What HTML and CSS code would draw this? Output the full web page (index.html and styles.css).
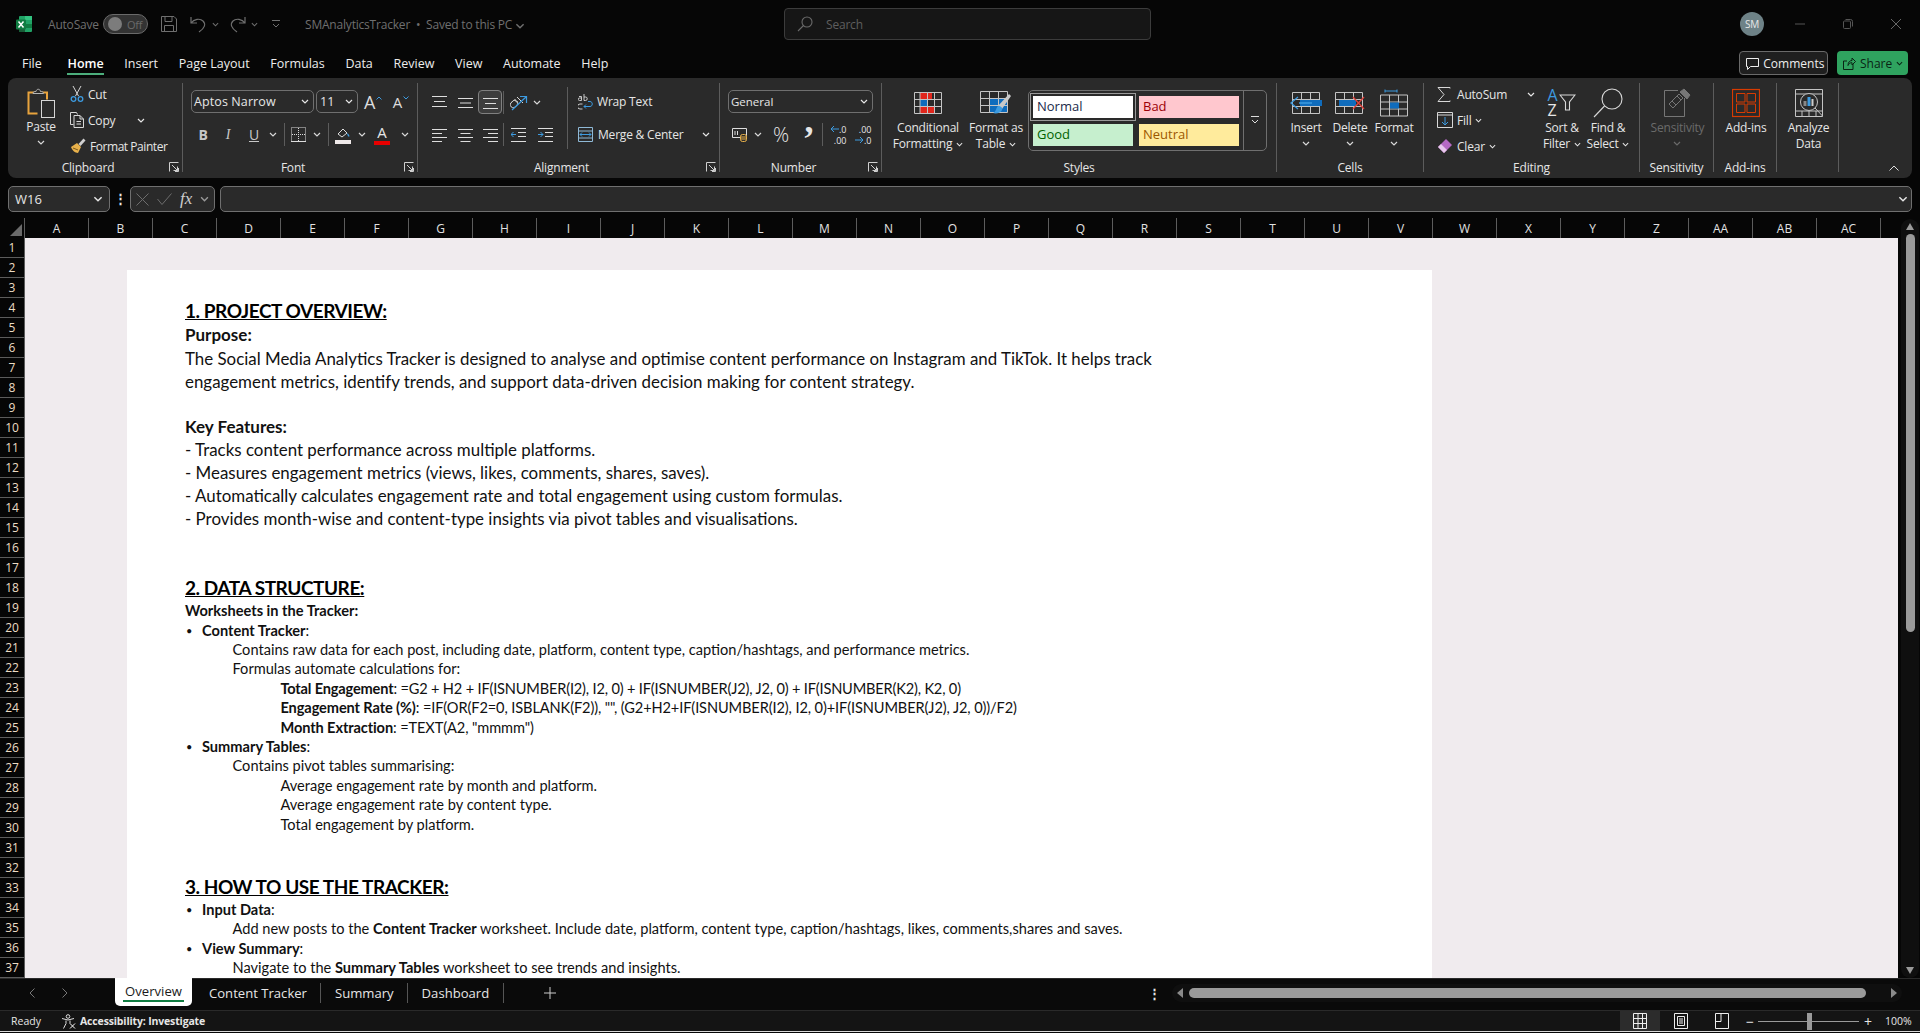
FILE: index.html
```html
<!DOCTYPE html>
<html lang="en">
<head>
    <meta charset="UTF-8">
    <title>SMAnalyticsTracker - Excel</title>
    <link rel="stylesheet" href="styles.css">
</head>
<body>
    <svg class="sprite">
        <symbol id="chev" viewBox="0 0 8 5"><path d="M1 1l3 3 3-3" fill="none" stroke="currentColor" stroke-width="1.2"/></symbol>
        <symbol id="launch" viewBox="0 0 10 10"><path d="M.5 9.5v-9h9M3 3l5.5 5.5M4.5 8.5h4v-4M9.5 6v3.5H6" fill="none" stroke="#cfcfcf"/></symbol>
        <symbol id="lines-l" viewBox="0 0 15 14"><path d="M0 1.5h15M0 5.5h10M0 9.5h15M0 13.5h10" stroke="#ddd"/></symbol>
        <symbol id="lines-c" viewBox="0 0 15 14"><path d="M0 1.5h15M2.500 5.500h10M0 9.500h15M2.500 13.500h10" stroke="#ddd"/></symbol>
        <symbol id="lines-r" viewBox="0 0 15 14"><path d="M0 1.5h15M5 5.500h10M0 9.500h15M5 13.500h10" stroke="#ddd"/></symbol>
    </svg>

    <header class="titlebar">
        <svg class="logo" width="16" height="16" viewBox="0 0 16 16"><rect x="3" width="13" height="16" rx="1" fill="#21a366"/><rect x="9" y="8" width="7" height="4" fill="#107c41"/><rect x="3" y="8" width="6" height="8" fill="#185c37"/><rect x="9" width="7" height="4" fill="#33c481"/><rect y="3.500" width="10" height="10" rx="1" fill="#107c41"/><path d="M2.500 5.500l5 6M7.500 5.500l-5 6" stroke="#fff" stroke-width="1.500"/></svg>
        <span class="autosave">AutoSave</span>
        <span class="toggle"><i></i>Off</span>
        <svg class="save" width="16" height="16" viewBox="0 0 16 16" fill="none" stroke="#6f6f6f"><path d="M.5.500h12.500l2.500 2.500v12.500H.5zM4 .5v5h7v-5M3.500 15.500v-6h9v6"/></svg>
        <svg class="undo" width="17" height="17" viewBox="0 0 17 17" fill="none" stroke="#6f6f6f" stroke-width="1.200"><path d="M1 1v6h6M1 7c3-4 9-5 12-2 3 3 2 7-4 11"/></svg>
        <svg class="tiny" width="7" height="5"><use href="#chev"/></svg>
        <svg class="redo" width="17" height="17" viewBox="0 0 17 17" fill="none" stroke="#6f6f6f" stroke-width="1.200"><path d="M16 1v6h-6M16 7c-3-4-9-5-12-2-3 3-2 7 4 11"/></svg>
        <svg class="tiny" width="7" height="5"><use href="#chev"/></svg>
        <svg class="qat" width="8" height="8" viewBox="0 0 8 8" fill="none" stroke="#6f6f6f"><path d="M0 .5h8M1 4l3 3 3-3"/></svg>
        <span class="doc-name">SMAnalyticsTracker &nbsp;•&nbsp; Saved to this PC <svg width="10" height="6"><use href="#chev"/></svg></span>
        <div class="search">
            <svg width="16" height="16" viewBox="0 0 16 16" fill="none" stroke="#6a6a6a" stroke-width="1.100"><circle cx="10" cy="6" r="5"/><path d="M6.500 9.500L1 15"/></svg>
            <span>Search</span>
        </div>
        <span class="avatar">SM</span>
        <svg class="win first" width="10" height="10" viewBox="0 0 10 10"><path d="M0 5h10" stroke="#555"/></svg>
        <svg class="win" width="10" height="10" viewBox="0 0 10 10" fill="none" stroke="#555"><rect x=".5" y="2" width="7" height="7.500" rx="1"/><path d="M2.500 .5h5a2 2 0 0 1 2 2v5"/></svg>
        <svg class="win" width="10" height="10" viewBox="0 0 10 10"><path d="M0 0l10 10M10 0L0 10" stroke="#666"/></svg>
    </header>

    <nav class="menu">
        <a class="file">File</a><a class="on">Home</a><a>Insert</a><a>Page Layout</a><a>Formulas</a><a>Data</a><a>Review</a><a>View</a><a>Automate</a><a>Help</a>
        <button class="comments"><svg width="13" height="13" viewBox="0 0 13 13" fill="none" stroke="#eee"><path d="M.5 1.500h12v8h-8l-3 3v-3h-1z"/></svg>Comments</button>
        <button class="share"><svg width="13" height="13" viewBox="0 0 13 13" fill="none" stroke="#0a2415"><path d="M10 7v5.500H.5V4H4M5 8.500C5 5 7 3.500 9 3.500V1l3.500 3.500L9 8V5.700C7 5.700 6 6.500 5 8.500z"/></svg>Share <svg width="7" height="5"><use href="#chev"/></svg></button>
    </nav>

    <section class="ribbon">
        <div class="group g-clip">
            <div class="body clip-body">
                <div class="big paste">
                    <svg width="28" height="30" viewBox="0 0 28 30" fill="none"><path d="M13 4.500H1.500v21h9" stroke="#e8a33d" stroke-width="2"/><path d="M13 4.500h7v7" stroke="#e8a33d" stroke-width="2"/><path d="M6 5.500c0-2 2-2 3-2 .5-3 4-3 4.500 0 1 0 3 0 3 2z" fill="#2a2a2a" stroke="#b5b5b5"/><rect x="14.500" y="12.500" width="13" height="17" fill="#2a2a2a" stroke="#d6d6d6"/></svg>
                    <span>Paste</span>
                    <svg class="c" width="8" height="5"><use href="#chev"/></svg>
                </div>
                <div class="small-col">
                    <div class="small"><svg width="14" height="16" viewBox="0 0 14 16" fill="none"><path d="M3 0l5.500 10M11 0L5.500 10" stroke="#d8d8d8"/><circle cx="3.500" cy="13" r="2.300" stroke="#3d9be0" stroke-width="1.300"/><circle cx="10.500" cy="13" r="2.300" stroke="#3d9be0" stroke-width="1.300"/></svg>Cut</div>
                    <div class="small"><svg width="14" height="16" viewBox="0 0 14 16" fill="none" stroke="#d8d8d8"><path d="M3.500 12.500h-3V.5h6l1 2"/><path d="M4 3.500h6l3.500 3.500v8.500H4zM10 3.500V7h3.500M6.500 9.500h4.500M6.500 12h4.500"/></svg>Copy <svg class="copy-c" width="8" height="5"><use href="#chev"/></svg></div>
                    <div class="small painter"><svg width="16" height="16" viewBox="0 0 16 16"><path d="M1 9l6-4 4 4-3 6c-3 0-6-3-7-6z" fill="#e8b14b"/><path d="M8.500 6l5-5.500 2 2-5 5.500z" fill="#cfcfcf"/><path d="M3 10l5 2" stroke="#7c5a1c"/></svg>Format Painter</div>
                </div>
            </div>
            <div class="label has-launch">Clipboard<svg class="launch" width="10" height="10"><use href="#launch"/></svg></div>
        </div>

        <div class="group g-font">
            <div class="body">
                <div class="row font-r1">
                    <div class="combo fontname">Aptos Narrow<svg width="8" height="5"><use href="#chev"/></svg></div>
                    <div class="combo fontname">11<svg width="8" height="5"><use href="#chev"/></svg></div>
                    <span class="grow">A<svg width="6" height="4" viewBox="0 0 6 4"><path d="M.5 3.500L3 1l2.500 2.500" fill="none" stroke="#3d9be0"/></svg></span>
                    <span class="shrink">A<svg width="6" height="4" viewBox="0 0 6 4"><path d="M.5.500L3 3 5.500.5" fill="none" stroke="#3d9be0"/></svg></span>
                </div>
                <div class="row font-r2">
                    <b class="btn">B</b>
                    <i class="btn serif">I</i>
                    <u class="btn">U</u>
                    <svg class="c" width="8" height="5"><use href="#chev"/></svg>
                    <span class="vsep"></span>
                    <svg width="15" height="15" viewBox="0 0 15 15" fill="none" stroke="#ddd"><path d="M.5.500h14v14H.5z" stroke-dasharray="1 1"/><path d="M7.500 1v13M1 7.500h13" stroke-dasharray="1 1"/><path d="M0 14.500h15"/></svg>
                    <svg class="c" width="8" height="5"><use href="#chev"/></svg>
                    <span class="vsep"></span>
                    <svg width="16" height="18" viewBox="0 0 16 18"><path d="M3 8l5-5 4 4-5 4z" fill="none" stroke="#ddd"/><path d="M12 7c2 1 3 3 2 4-1-1-2-2-2-4z" fill="#3d9be0"/><rect y="14" width="16" height="4" fill="#efe9e9"/></svg>
                    <svg class="c" width="8" height="5"><use href="#chev"/></svg>
                    <span class="color-a">A<i></i></span>
                    <svg class="c" width="8" height="5"><use href="#chev"/></svg>
                </div>
            </div>
            <div class="label has-launch">Font<svg class="launch" width="10" height="10"><use href="#launch"/></svg></div>
        </div>

        <div class="group g-align">
            <div class="body align-body">
                <div class="align-grid">
                    <div class="row al-r1">
                        <svg width="15" height="13" viewBox="0 0 15 13"><path d="M0 .5h15M2 5.500h11M0 10.500h15" stroke="#ddd"/></svg>
                        <svg width="15" height="13" viewBox="0 0 15 13"><path d="M0 2.500h15M2 7h11M0 11.500h15" stroke="#ddd"/></svg>
                        <span class="sel"><svg width="15" height="13" viewBox="0 0 15 13"><path d="M0 2.500h15M2 7.500h11M0 12.500h15" stroke="#ddd"/></svg></span>
                        <span class="vsep"></span>
                        <svg width="18" height="17" viewBox="0 0 18 17" fill="none"><path d="M2 8a3 3 0 1 1 4 4 3 3 0 1 1-4-4zM7 3l6 6M8 8a2.500 2.500 0 0 1-3-3" stroke="#d8d8d8"/><path d="M2 16L16 3M10 2.500h6.500V9" stroke="#3d9be0" stroke-width="1.200"/></svg>
                        <svg class="c" width="8" height="5"><use href="#chev"/></svg>
                    </div>
                    <div class="row al-r2">
                        <svg width="15" height="14"><use href="#lines-l"/></svg>
                        <svg width="15" height="14"><use href="#lines-c"/></svg>
                        <svg width="15" height="14"><use href="#lines-r"/></svg>
                        <span class="vsep"></span>
                        <svg width="15" height="14" viewBox="0 0 15 14"><path d="M0 .5h15M7 4.500h8M7 8.500h8M0 13.500h15" stroke="#ddd"/><path d="M5 6.500H0M2.500 4L0 6.500 2.500 9" fill="none" stroke="#3d9be0"/></svg>
                        <svg width="15" height="14" viewBox="0 0 15 14"><path d="M0 .5h15M7 4.500h8M7 8.500h8M0 13.500h15" stroke="#ddd"/><path d="M0 6.500h5M2.500 4L5 6.500 2.500 9" fill="none" stroke="#3d9be0"/></svg>
                    </div>
                </div>
                <span class="vsep tall"></span>
                <div class="wrap-col">
                    <div class="small wrap"><svg width="15" height="16" viewBox="0 0 15 16"><path d="M1 2.500h2.500v4H1.500a1 1 0 0 1 0-2.500h2M6 0v6.500h1.500a1.500 1.500 0 0 0 0-3.500H6M4.500 10H2a2 2 0 0 0 0 5h2.500" fill="none" stroke="#d8d8d8" stroke-width=".9"/><path d="M6 12.500h6c3 0 3-5 0-5h-2M8 10.500L6 12.500l2 2" fill="none" stroke="#3d9be0"/></svg>Wrap Text</div>
                    <div class="small merge"><svg width="15" height="15" viewBox="0 0 15 15" fill="none"><path d="M.5.500h14v14H.5zM.5 4h14M.5 11h14" stroke="#8fb9d6"/><path d="M2 7.500h11M4 5.500l-2 2 2 2M11 5.500l2 2-2 2" stroke="#3d9be0"/></svg>Merge &amp; Center<svg class="merge-c" width="8" height="5"><use href="#chev"/></svg></div>
                </div>
            </div>
            <div class="label has-launch">Alignment<svg class="launch" width="10" height="10"><use href="#launch"/></svg></div>
        </div>

        <div class="group g-num">
            <div class="body">
                <div class="row"><div class="combo general">General<svg width="8" height="5"><use href="#chev"/></svg></div></div>
                <div class="row num-r2">
                    <svg width="16" height="15" viewBox="0 0 16 15" fill="none"><path d="M.5 1.500h14v9H.5z" stroke="#ddd"/><path d="M3 4v4M5.500 4v4" stroke="#ddd"/><rect x="8.500" y="7.500" width="6" height="7" rx="2" fill="#2a2a2a" stroke="#e8b14b"/><path d="M8.500 10h6M8.500 12h6" stroke="#e8b14b"/></svg>
                    <svg class="c" width="8" height="5"><use href="#chev"/></svg>
                    <span class="pct">%</span>
                    <span class="comma">,</span>
                    <span class="vsep"></span>
                    <span class="dec"><span class="dec-top"><svg width="9" height="8" viewBox="0 0 9 8" fill="none" stroke="#3d9be0"><path d="M9 4H1M4 1L1 4l3 3"/></svg>.0</span><span class="dec-low">.00</span></span>
                    <span class="dec"><span class="dec-low">.00</span><span class="dec-top"><svg width="9" height="8" viewBox="0 0 9 8" fill="none" stroke="#3d9be0"><path d="M0 4h8M5 1l3 3-3 3"/></svg>.0</span></span>
                </div>
            </div>
            <div class="label has-launch">Number<svg class="launch" width="10" height="10"><use href="#launch"/></svg></div>
        </div>

        <div class="group g-styles">
            <div class="body styles-body">
                <div class="big w68">
                    <svg width="28" height="22" viewBox="0 0 28 22"><path d="M6 1h12v6H6zM6 15h14v6H6z" fill="#e0261c"/><path d="M6 8h8v6H6z" fill="#0f6cbd"/><path d="M.5.500h27v21H.5zM.5 7.500h27M.5 14.500h27M6 .5v21M13.500.5v21M20.500.5v21" fill="none" stroke="#c4c4c4"/></svg>
                    <span>Conditional</span>
                    <span>Formatting <svg width="7" height="5"><use href="#chev"/></svg></span>
                </div>
                <div class="big w58">
                    <svg width="32" height="24" viewBox="0 0 32 24"><path d="M10 8h18v13H10z" fill="#0f6cbd"/><path d="M.5.500h27v21H.5zM.5 7.500h27M.5 14.500h27M9.500.5v21M18.500.5v21" fill="none" stroke="#c4c4c4"/><path d="M18 15L29 3l2 2-9 13z" fill="#c9c9c9"/><path d="M18 15c3 0 5 2 4 4-1 3-6 4-9 3 3-1 3-5 5-7z" fill="#3d9be0"/></svg>
                    <span>Format as</span>
                    <span>Table <svg width="7" height="5"><use href="#chev"/></svg></span>
                </div>
                <div class="gallery">
                    <div class="swatches">
                        <span class="sw normal">Normal</span>
                        <span class="sw bad">Bad</span>
                        <span class="sw good">Good</span>
                        <span class="sw neutral">Neutral</span>
                    </div>
                    <div class="more"><svg width="8" height="8" viewBox="0 0 8 8" fill="none" stroke="#ddd"><path d="M0 .5h8M1 4l3 3 3-3"/></svg></div>
                </div>
            </div>
            <div class="label">Styles</div>
        </div>

        <div class="group g-cells">
            <div class="body cells-body">
                <div class="big w44">
                    <svg width="32" height="22" viewBox="0 0 32 22"><path d="M2.500.5h27v21h-27zM2.500 7.500h27M2.500 14.500h27M11.500.5v21M20.500.5v21" fill="none" stroke="#c4c4c4"/><path d="M10 8h22v6H10z" fill="#0f6cbd"/><path d="M9 11h13M8 5l-7 6 7 6" fill="none" stroke="#3d9be0" stroke-width="1.300"/></svg>
                    <span>Insert</span>
                    <svg class="c" width="8" height="5"><use href="#chev"/></svg>
                </div>
                <div class="big w44">
                    <svg width="30" height="22" viewBox="0 0 30 22"><path d="M.5.500h27v21H.5zM.5 7.500h27M.5 14.500h27M9.500.5v21M18.500.5v21" fill="none" stroke="#c4c4c4"/><path d="M4 8h17v6H4z" fill="#0f6cbd"/><path d="M18 5l11 12M29 5L18 17" stroke="#e0403a" stroke-width="1.300"/></svg>
                    <span>Delete</span>
                    <svg class="c" width="8" height="5"><use href="#chev"/></svg>
                </div>
                <div class="big w44">
                    <svg width="28" height="27" class="fmt" viewBox="0 0 28 27"><path d="M5 1.500h12M5 0v3M17 0v3" stroke="#3d9be0"/><path d="M.5 5.500h27v21H.5zM.5 12.500h27M.5 19.500h27M9.500 5.500v21M18.500 5.500v21" fill="none" stroke="#c4c4c4"/><path d="M10 13h9v6h-9z" fill="#0f6cbd"/></svg>
                    <span>Format</span>
                    <svg class="c" width="8" height="5"><use href="#chev"/></svg>
                </div>
            </div>
            <div class="label">Cells</div>
        </div>

        <div class="group g-edit">
            <div class="body edit-body">
                <div class="small-col">
                    <div class="small sum"><svg width="14" height="15" viewBox="0 0 14 15" fill="none" stroke="#d8d8d8"><path d="M13 1.500V.5H1l6 7-6 7h12v-1"/></svg>AutoSum<svg class="sum-c" width="8" height="5"><use href="#chev"/></svg></div>
                    <div class="small"><svg width="16" height="16" viewBox="0 0 16 16" fill="none"><path d="M.5.500h15v15H.5zM.5 3h15" stroke="#d8d8d8"/><path d="M8 5v8M5 10l3 3 3-3" stroke="#3d9be0"/></svg>Fill <svg width="7" height="5"><use href="#chev"/></svg></div>
                    <div class="small"><svg width="16" height="16" viewBox="0 0 16 16"><path d="M1 9l8-8 6 6-8 8z" fill="#b569c4"/><path d="M1 9l3-3 6 6-3 3z" fill="#e7c6ec"/></svg>Clear <svg width="7" height="5"><use href="#chev"/></svg></div>
                </div>
                <div class="big w46">
                    <span class="sort-ic">
                        <span class="az"><em>A</em><span>Z</span></span>
                        <svg width="17" height="17" viewBox="0 0 17 17" fill="none" stroke="#d8d8d8" stroke-width="1.100"><path d="M1 1h15l-5.500 7v8h-4V8z"/></svg>
                    </span>
                    <span>Sort &amp;</span>
                    <span>Filter <svg width="7" height="5"><use href="#chev"/></svg></span>
                </div>
                <div class="big w46">
                    <svg width="30" height="30" viewBox="0 0 30 30" fill="none" stroke="#d8d8d8" stroke-width="1.100"><circle cx="19" cy="11" r="10"/><path d="M11.500 18L1 29"/></svg>
                    <span>Find &amp;</span>
                    <span>Select <svg width="7" height="5"><use href="#chev"/></svg></span>
                </div>
            </div>
            <div class="label">Editing</div>
        </div>

        <div class="group g-sens">
            <div class="body center">
                <div class="big dim">
                    <svg width="28" height="30" viewBox="0 0 28 30" fill="none" stroke="#767676"><path d="M15 2.500H1.500v26h20V10"/><path d="M6 16l10-10 4 4-10 10z M14 8l4 4M9 13l4 4"/><path d="M17 4l4-3 6 6-3 4z" fill="#767676"/></svg>
                    <span>Sensitivity</span>
                    <svg class="c" width="8" height="5"><use href="#chev"/></svg>
                </div>
            </div>
            <div class="label">Sensitivity</div>
        </div>

        <div class="group g-add">
            <div class="body center">
                <div class="big">
                    <svg width="28" height="28" viewBox="0 0 28 28" fill="none" stroke="#d83b01"><rect x=".5" y=".5" width="27" height="27" stroke-width="1.200"/><path d="M4.500 4.500h8.500v8.500H4.500zM15 4.500h8.500v8.500H15zM4.500 15h8.500v8.500H4.500zM15 15h8.500v8.500H15z"/></svg>
                    <span>Add-ins</span>
                </div>
            </div>
            <div class="label">Add-ins</div>
        </div>

        <div class="group g-data">
            <div class="body center">
                <div class="big">
                    <svg width="28" height="28" viewBox="0 0 28 28" fill="none" stroke="#c4c4c4"><path d="M.5.500h27v27H.5zM.5 5h27M.5 22h27M7 22v5.500M14 22v5.500M21 22v5"/><circle cx="14" cy="13" r="8.500" fill="#2a2a2a"/><path d="M20 19l8 8.500"/><rect x="8.500" y="12" width="3" height="5" fill="#888" stroke="none"/><rect x="12.500" y="8" width="3" height="9" fill="#3d9be0" stroke="none"/><rect x="16.500" y="10" width="2" height="7" fill="#ccc" stroke="none"/></svg>
                    <span>Analyze</span>
                    <span>Data</span>
                </div>
            </div>
            <div class="label"></div>
        </div>
        <svg class="collapse" width="10" height="6" viewBox="0 0 10 6"><path d="M.5 5.500L5 1l4.500 4.500" fill="none" stroke="#ddd"/></svg>
    </section>

    <section class="formula">
        <div class="namebox">W16<svg width="10" height="6"><use href="#chev"/></svg></div>
        <span class="fdots">⋮</span>
        <div class="fbtns">
            <svg width="13" height="13" viewBox="0 0 13 13"><path d="M.5.500l12 12M12.500.5l-12 12" stroke="#6d6d6d"/></svg>
            <svg width="15" height="12" viewBox="0 0 15 12"><path d="M.5 6l4.500 5.500L14.500.5" fill="none" stroke="#6d6d6d"/></svg>
            <span class="fx">fx</span>
            <svg width="9" height="6"><use href="#chev"/></svg>
        </div>
        <div class="fcontent"><svg width="10" height="6"><use href="#chev"/></svg></div>
    </section>

    <main class="workarea">
        <div class="grid">
            <div class="colhead">
                <span class="corner"><i></i></span>
                <span>A</span><span>B</span><span>C</span><span>D</span><span>E</span><span>F</span><span>G</span><span>H</span><span>I</span><span>J</span><span>K</span><span>L</span><span>M</span><span>N</span><span>O</span><span>P</span><span>Q</span><span>R</span><span>S</span><span>T</span><span>U</span><span>V</span><span>W</span><span>X</span><span>Y</span><span>Z</span><span>AA</span><span>AB</span><span>AC</span><span class="cut"></span>
            </div>
            <div class="sheet">
                <div class="rowhead">
                    <span>1</span><span>2</span><span>3</span><span>4</span><span>5</span><span>6</span><span>7</span><span>8</span><span>9</span><span>10</span><span>11</span><span>12</span><span>13</span><span>14</span><span>15</span><span>16</span><span>17</span><span>18</span><span>19</span><span>20</span><span>21</span><span>22</span><span>23</span><span>24</span><span>25</span><span>26</span><span>27</span><span>28</span><span>29</span><span>30</span><span>31</span><span>32</span><span>33</span><span>34</span><span>35</span><span>36</span><span>37</span>
                </div>
                <div class="canvas">
                    <article class="textbox">
                        <h2>1. PROJECT OVERVIEW:</h2>
                        <p class="lead">Purpose:</p>
                        <p class="big-t">The Social Media Analytics Tracker is designed to analyse and optimise content performance on Instagram and TikTok. It helps track</p>
                        <p class="big-t">engagement metrics, identify trends, and support data-driven decision making for content strategy.</p>
                        <p class="big-t">&nbsp;</p>
                        <p class="lead">Key Features:</p>
                        <p class="big-t">- Tracks content performance across multiple platforms.</p>
                        <p class="big-t">- Measures engagement metrics (views, likes, comments, shares, saves).</p>
                        <p class="big-t">- Automatically calculates engagement rate and total engagement using custom formulas.</p>
                        <p class="big-t">- Provides month-wise and content-type insights via pivot tables and visualisations.</p>

                        <h2 class="h-2">2. DATA STRUCTURE:</h2>
                        <p class="sub"><b>Worksheets in the Tracker:</b></p>
                        <p class="t bullet"><b>Content Tracker</b>:</p>
                        <p class="t l2">Contains raw data for each post, including date, platform, content type, caption/hashtags, and performance metrics.</p>
                        <p class="t l2">Formulas automate calculations for:</p>
                        <p class="t l3 tight"><b>Total Engagement</b>: =G2 + H2 + IF(ISNUMBER(I2), I2, 0) + IF(ISNUMBER(J2), J2, 0) + IF(ISNUMBER(K2), K2, 0)</p>
                        <p class="t l3 tighter"><b>Engagement Rate (%)</b>: =IF(OR(F2=0, ISBLANK(F2)), "", (G2+H2+IF(ISNUMBER(I2), I2, 0)+IF(ISNUMBER(J2), J2, 0))/F2)</p>
                        <p class="t l3 tighter"><b>Month Extraction</b>: =TEXT(A2, "mmmm")</p>
                        <p class="t bullet"><b>Summary Tables</b>:</p>
                        <p class="t l2">Contains pivot tables summarising:</p>
                        <p class="t l3">Average engagement rate by month and platform.</p>
                        <p class="t l3">Average engagement rate by content type.</p>
                        <p class="t l3">Total engagement by platform.</p>

                        <h2 class="h-3">3. HOW TO USE THE TRACKER:</h2>
                        <p class="t bullet"><b>Input Data</b>:</p>
                        <p class="t l2">Add new posts to the <b>Content Tracker</b> worksheet. Include date, platform, content type, caption/hashtags, likes, comments,shares and saves.</p>
                        <p class="t bullet"><b>View Summary</b>:</p>
                        <p class="t l2">Navigate to the <b>Summary Tables</b> worksheet to see trends and insights.</p>
                    </article>
                </div>
            </div>
        </div>
        <aside class="vscroll">
            <span class="up"></span>
            <span class="thumb"></span>
            <span class="down"></span>
        </aside>
    </main>

    <section class="tabsbar">
        <div class="tabnav">
            <svg width="6" height="10" viewBox="0 0 6 10"><path d="M5.500.5L1 5l4.500 4.500" fill="none" stroke="#777"/></svg>
            <svg width="6" height="10" viewBox="0 0 6 10"><path d="M.5.500L5 5 .5 9.500" fill="none" stroke="#777"/></svg>
        </div>
        <a class="tab active">Overview</a>
        <a class="tab first-tab">Content Tracker</a>
        <a class="tab">Summary</a>
        <a class="tab">Dashboard</a>
        <svg class="addtab" width="12" height="12" viewBox="0 0 12 12"><path d="M6 0v12M0 6h12" stroke="#ccc"/></svg>
        <span class="tabdots">⋮</span>
        <div class="hscroll">
            <span class="left"></span>
            <span class="hthumb"></span>
            <span class="right"></span>
        </div>
    </section>

    <footer class="status">
        <span class="ready">Ready</span>
        <svg class="acc" width="16" height="15" viewBox="0 0 16 15" fill="none" stroke="#ddd"><circle cx="7" cy="2.500" r="1.800"/><path d="M1 4.500l6 1.500 6-1.500M5 6.500v3L2.500 14.500M9 6.500v3"/><path d="M9 9.500l5 5M14 9.500l-5 5" stroke="#fff"/></svg>
        <span class="acc-text">Accessibility: Investigate</span>
        <div class="views">
            <span class="view on"><svg width="14" height="16" viewBox="0 0 14 16" fill="none" stroke="#eee"><path d="M.5.500h13v15H.5zM.5 5.500h13M.5 10.500h13M5 .5v15M9.500.5v15"/></svg></span>
            <span class="view"><svg width="14" height="16" viewBox="0 0 14 16" fill="none" stroke="#eee"><path d="M.5.500h13v15H.5zM3.500 3.500h7v9h-7zM5 6h4M5 8h4M5 10h4"/></svg></span>
            <span class="view"><svg width="14" height="16" viewBox="0 0 14 16" fill="none" stroke="#eee"><path d="M.5.500h13v15H.5zM6 .5v8H.5"/></svg></span>
        </div>
        <span class="zoom-btn">−</span>
        <span class="slider"><i></i></span>
        <span class="zoom-btn">+</span>
        <span class="pct-z">100%</span>
    </footer>
</body>
</html>
```

FILE: styles.css
```css
* {
    box-sizing: border-box;
}
html, body {
    height: 100%;
}
body {
    margin: 0;
    height: 1033px;
    overflow: hidden;
    background: #060606;
    color: #e6e6e6;
    font-family: "Open Sans", "Noto Sans", sans-serif;
    font-size: 12px;
    letter-spacing: -.2px;
    display: flex;
    flex-direction: column;
}
svg {
    flex: none;
}
.sprite {
    display: none;
}

/* title bar */
.titlebar {
    height: 48px;
    display: flex;
    align-items: center;
    padding-left: 16px;
    color: #6f6f6f;
}
.autosave {
    margin-left: 16px;
    width: 55px;
}
.toggle {
    width: 45px;
    height: 20px;
    border: 1px solid #6a6a6a;
    border-radius: 10px;
    background: #333;
    display: flex;
    align-items: center;
    gap: 5px;
    padding-left: 4px;
    font-size: 11px;
    color: #6a6a6a;
}
.toggle i {
    width: 14px;
    height: 14px;
    border-radius: 50%;
    background: #7c7c7c;
}
.save {
    margin-left: 13px;
}
.undo {
    margin-left: 13px;
}
.tiny {
    margin-left: 5px;
    color: #6f6f6f;
}
.redo {
    margin-left: 10px;
}
.qat {
    margin-left: 14px;
}
.doc-name {
    margin-left: 25px;
    width: 479px;
    white-space: nowrap;
}
.search {
    width: 367px;
    height: 32px;
    border: 1px solid #3c3c3c;
    border-radius: 4px;
    background: #161616;
    display: flex;
    align-items: center;
    gap: 13px;
    padding-left: 12px;
    font-size: 12px;
    color: #5e5e5e;
}
.avatar {
    margin-left: 589px;
    width: 24px;
    height: 24px;
    border-radius: 50%;
    background: #6e8287;
    color: #e8e8e8;
    font-size: 10px;
    display: flex;
    align-items: center;
    justify-content: center;
}
.win {
    margin-left: 38px;
}
.win.first {
    margin-left: 31px;
}

/* menu */
.menu {
    height: 30px;
    display: flex;
    align-items: flex-start;
    padding-left: 22px;
    font-size: 12.500px;
    letter-spacing: 0;
    gap: 20.700px;
}
.menu a {
    padding-top: 7px;
    height: 27px;
    color: #ededed;
}
.menu .file {
    margin-right: 5px;
}
.menu a.on {
    font-weight: 600;
    color: #fff;
    border-bottom: 2px solid #4cae7c;
}
.comments, .share {
    height: 24px;
    border-radius: 4px;
    font: inherit;
    font-size: 12px;
    display: flex;
    align-items: center;
    gap: 4px;
    padding: 0 6px;
    margin-top: 3px;
    white-space: nowrap;
}
.comments {
    margin-left: auto;
    width: 89px;
    background: #1f1f1f;
    border: 1px solid #6a6a6a;
    color: #eee;
}
.share {
    width: 71px;
    margin: 3px 12px 0 -12px;
    background: #2fa35f;
    border: none;
    color: #0a2415;
}

/* ribbon */
.ribbon {
    position: relative;
    height: 100px;
    margin: 0 8px;
    padding-top: 5px;
    background: #2a2a2a;
    border-radius: 8px;
    display: flex;
    align-items: flex-start;
}
.group {
    position: relative;
    height: 89px;
    display: flex;
    flex-direction: column;
    border-right: 1px solid #5c5c5c;
}
.g-clip { width: 175px; }
.g-font { width: 235px; }
.g-align { width: 302px; }
.g-num { width: 162px; }
.g-styles { width: 395px; }
.g-cells { width: 147px; }
.g-edit { width: 216px; }
.g-sens { width: 74px; }
.g-add { width: 63px; }
.g-data { width: 62px; }
.body {
    height: 79px;
    padding: 7px 8px 0;
}
.label {
    height: 11px;
    line-height: 14px;
    text-align: center;
    white-space: nowrap;
}
.has-launch {
    padding-right: 14px;
}
.launch {
    position: absolute;
    right: 3px;
    bottom: 0;
}
.big {
    display: flex;
    flex-direction: column;
    align-items: center;
    line-height: 16px;
    white-space: nowrap;
}
.big > svg:first-child {
    height: 37px;
    padding-top: 3px;
}
.big span svg {
    margin-left: 1px;
    vertical-align: 1px;
}
.big .c {
    margin-top: 5px;
}
.c {
    color: #d8d8d8;
}
.center {
    display: flex;
    justify-content: center;
    padding: 0 0 0 2px;
}
.dim, .dim .c {
    color: #6a6a6a;
}

/* clipboard */
.clip-body {
    display: flex;
    padding: 0 0 0 8px;
}
.paste {
    width: 50px;
}
.paste > svg:first-child {
    height: 36px;
    padding-top: 4px;
}
.small-col {
    margin-left: 4px;
    margin-top: -2px;
}
.small {
    height: 26px;
    display: flex;
    align-items: center;
    gap: 4px;
    white-space: nowrap;
}
.painter {
    letter-spacing: -.45px;
}
.copy-c {
    margin-left: 18px;
}

/* font */
.row {
    height: 23px;
    display: flex;
    align-items: center;
}
.combo {
    height: 23px;
    border: 1px solid #6f6f6f;
    border-radius: 5px;
    background: #2a2a2a;
    display: flex;
    align-items: center;
    justify-content: space-between;
    padding: 0 4px 0 2px;
}
.fontname {
    font-size: 12.500px;
    letter-spacing: .1px;
}
.font-r1 {
    display: grid;
    grid-template-columns: 123px 42px 26px 26px;
    column-gap: 2px;
}
.font-r1 .combo:nth-child(2) {
    padding-left: 3px;
}
.grow, .shrink {
    color: #ddd;
    display: flex;
    align-items: flex-start;
    justify-content: center;
    gap: 1px;
    line-height: 20px;
}
.grow {
    font-size: 18px;
}
.shrink {
    font-size: 15px;
}
.grow svg, .shrink svg {
    margin-top: 4px;
}
.font-r2 {
    margin-top: 10px;
    display: grid;
    grid-template-columns: 24px 26px 26px 12px 10px 19px 18px 4px 26px 11px 30px 15px;
    justify-items: center;
}
.btn {
    font-size: 14px;
    color: #c8c8c8;
}
.serif {
    font-family: "Liberation Serif", serif;
}
.vsep {
    display: block;
    width: 1px;
    height: 23px;
    background: #5c5c5c;
}
.color-a {
    font-size: 15px;
    line-height: 15px;
    display: flex;
    flex-direction: column;
    align-items: center;
    width: 16px;
}
.color-a i {
    width: 16px;
    height: 4px;
    margin-top: 1px;
    background: #e80000;
}

/* alignment */
.align-body {
    display: flex;
    padding-left: 8px;
}
.al-r1, .al-r2 {
    display: grid;
    justify-items: center;
    grid-template-columns: 26px 26px 24px 3px 27px 10px;
}
.al-r2 {
    margin-top: 10px;
    grid-template-columns: 26px 26px 24px 3px 27px 26px;
}
.sel {
    width: 24px;
    height: 24px;
    border: 1px solid #808080;
    border-radius: 4px;
    background: #3d3d3d;
    display: flex;
    align-items: center;
    justify-content: center;
}
.tall {
    height: 62px;
    margin: -3px 0 0 9px;
}
.wrap-col {
    margin-left: 10px;
}
.wrap {
    height: 23px;
    gap: 4px;
}
.merge {
    height: 23px;
    margin-top: 10px;
    gap: 5px;
}
.merge-c {
    margin-left: 14px;
}

/* number */
.general {
    width: 146px;
    font-size: 11.500px;
    letter-spacing: 0;
}
.num-r2 {
    margin-top: 10px;
    display: grid;
    grid-template-columns: 20px 16px 30px 22px 8px 24px 26px;
    justify-items: center;
    padding-left: 2px;
}
.pct {
    font-size: 20px;
    line-height: 23px;
    font-weight: 300;
}
.comma {
    font-family: "Liberation Serif", serif;
    font-size: 36px;
    font-weight: 700;
    line-height: 23px;
    transform: translate(2px, -14px);
}
.dec {
    display: flex;
    flex-direction: column;
    align-items: flex-end;
    font-size: 9px;
    line-height: 11px;
    letter-spacing: 0;
    width: 17px;
}
.dec-top {
    display: flex;
    align-items: center;
}

/* styles */
.styles-body {
    display: flex;
    padding: 0 0 0 11px;
}
.w68 {
    width: 70px;
}
.w58 {
    width: 66px;
}
.gallery {
    margin: 7px 0 0 -1px;
    width: 239px;
    height: 61px;
    border: 1px solid #6f6f6f;
    border-radius: 5px;
    display: flex;
}
.swatches {
    width: 214px;
    padding: 5px 0 0 4px;
    display: grid;
    grid-template-columns: 100px 100px;
    grid-auto-rows: 22px;
    gap: 6px;
}
.sw {
    font-size: 13px;
    letter-spacing: 0;
    line-height: 20px;
    padding-left: 4px;
    overflow: hidden;
}
.normal {
    background: #fff;
    color: #1a2a4a;
    box-shadow: 0 0 0 2px #2a2a2a, 0 0 0 3px #9a9a9a;
}
.bad {
    background: #ffc7ce;
    color: #9c0006;
}
.good {
    background: #c6efce;
    color: #006100;
}
.neutral {
    background: #ffeb9c;
    color: #9c5700;
}
.more {
    flex: 1;
    border-left: 1px solid #6f6f6f;
    display: flex;
    justify-content: center;
    padding-top: 25px;
}

/* cells */
.cells-body {
    display: flex;
    padding: 0 0 0 7px;
}
.w44 {
    width: 44px;
}
.big > .fmt {
    height: 37px;
    padding-top: 0;
}

/* editing */
.edit-body {
    display: flex;
    padding: 0 0 0 13px;
}
.edit-body .small-col {
    margin-left: 0;
    width: 102px;
}
.sum {
    gap: 6px;
}
.sum-c {
    margin-left: 14px;
}
.w46 {
    width: 46px;
}
.sort-ic {
    height: 37px;
    display: flex;
    align-items: center;
    gap: 1px;
    padding-top: 2px;
}
.az {
    display: flex;
    flex-direction: column;
    font-size: 16px;
    line-height: 15px;
}
.az em {
    font-style: normal;
    color: #3d9be0;
}
.collapse {
    position: absolute;
    right: 13px;
    top: 87px;
}

/* formula bar */
.formula {
    height: 26px;
    margin: 8px 8px 0;
    display: flex;
    font-size: 13px;
    letter-spacing: 0;
}
.namebox, .fbtns, .fcontent {
    border: 1px solid #6f6f6f;
    border-radius: 5px;
    background: #2a2a2a;
    display: flex;
    align-items: center;
}
.namebox {
    width: 102px;
    justify-content: space-between;
    padding: 0 6px;
}
.fdots {
    width: 20px;
    text-align: center;
    line-height: 24px;
    font-weight: 700;
}
.fbtns {
    width: 85px;
    padding-left: 5px;
    gap: 8px;
    color: #9a9a9a;
}
.fx {
    font-family: "Liberation Serif", serif;
    font-style: italic;
    font-size: 17px;
    color: #cfcfcf;
}
.fcontent {
    flex: 1;
    margin-left: 5px;
    justify-content: flex-end;
    padding-right: 3px;
}

/* grid */
.workarea {
    height: 760px;
    margin-top: 6px;
    display: flex;
    letter-spacing: 0;
}
.grid {
    width: 1898px;
    display: flex;
    flex-direction: column;
}
.colhead {
    height: 20px;
    display: flex;
    font-size: 12px;
    color: #e2e2e2;
}
.colhead span {
    width: 64px;
    flex: none;
    border-right: 1px solid #5c5c5c;
    text-align: center;
    line-height: 21px;
}
.colhead .corner {
    width: 25px;
    position: relative;
}
.corner i {
    position: absolute;
    right: 2px;
    bottom: 2px;
    width: 0;
    height: 0;
    border-left: 12px solid transparent;
    border-bottom: 12px solid #6a6a6a;
}
.colhead .cut {
    width: 17px;
    border: none;
}
.sheet {
    height: 740px;
    display: flex;
}
.rowhead {
    width: 25px;
    flex: none;
    font-size: 12px;
    color: #ecdcc4;
}
.rowhead span {
    display: block;
    height: 20px;
    line-height: 20px;
    text-align: center;
    border-bottom: 1px solid #5c5c5c;
    border-right: 1px solid #5c5c5c;
}
.canvas {
    flex: 1;
    background: #f0ebee;
    padding: 32px 0 0 102px;
    overflow: hidden;
}
.textbox {
    width: 1305px;
    height: 708px;
    background: #fff;
    padding: 28px 0 0 58px;
    overflow: hidden;
    color: #111;
    font-family: Lato, "Open Sans", sans-serif;
}
.textbox p, .textbox h2 {
    margin: 0;
    white-space: nowrap;
}
.textbox h2 {
    font-size: 19px;
    letter-spacing: -.45px;
    line-height: 26px;
    font-weight: 700;
    text-decoration: underline;
    color: #000;
}
.textbox .h-2 {
    margin-top: 45px;
}
.textbox .h-3 {
    margin-top: 40px;
}
.lead {
    font-size: 17px;
    font-weight: 700;
    line-height: 22.500px;
}
.big-t {
    font-size: 16.900px;
    line-height: 23px;
}
.sub {
    font-size: 14.600px;
    line-height: 19.500px;
}
.t {
    font-size: 14.600px;
    line-height: 19.400px;
}
.tight {
    letter-spacing: -.18px;
}
.tighter {
    letter-spacing: -.11px;
}
.bullet {
    padding-left: 17px;
    position: relative;
}
.bullet::before {
    content: "•";
    position: absolute;
    left: 1px;
    font-size: 11px;
}
.l2 {
    padding-left: 47.500px;
}
.l3 {
    padding-left: 95.500px;
}

/* scrollbars */
.vscroll {
    width: 18px;
    margin: 1px 1px 0 3px;
    border-radius: 9px;
    background: #0f0f0f;
    display: flex;
    flex-direction: column;
    align-items: center;
    padding: 4px 0;
}
.up, .down {
    width: 0;
    height: 0;
    border-left: 4px solid transparent;
    border-right: 4px solid transparent;
}
.up {
    border-bottom: 7px solid #9a9a9a;
}
.down {
    border-top: 7px solid #9a9a9a;
    margin-top: auto;
}
.thumb {
    width: 9px;
    height: 398px;
    margin-top: 4px;
    border-radius: 5px;
    background: #9a9a9a;
}

/* sheet tabs */
.tabsbar {
    height: 32px;
    display: flex;
    align-items: flex-start;
    background: #0a0a0a;
    font-size: 13.100px;
    letter-spacing: 0;
    border-top: 1px solid #2a2a2a;
}
.tabnav {
    width: 115px;
    height: 28px;
    display: flex;
    align-items: center;
    gap: 27px;
    padding-left: 29px;
}
.tab {
    height: 20px;
    margin-top: 4px;
    padding: 0 13.500px;
    line-height: 20px;
    border-right: 1px solid #555;
    color: #e6e6e6;
}
.first-tab {
    padding-left: 17px;
}
.tab.active {
    width: 77px;
    height: 28px;
    margin-top: -1px;
    padding: 3px 0 0;
    text-align: center;
    background: #fff;
    color: #1a1a1a;
    border: none;
    border-radius: 0 0 5px 5px;
    position: relative;
}
.tab.active::after {
    content: "";
    position: absolute;
    left: 8px;
    right: 8px;
    bottom: 4px;
    height: 2px;
    background: #107c41;
}
.addtab {
    margin: 8px 0 0 40px;
}
.tabdots {
    margin-left: 592px;
    width: 24px;
    padding-right: 10px;
    line-height: 28px;
    text-align: center;
    font-weight: 700;
}
.hscroll {
    width: 730px;
    height: 18px;
    margin-top: 5px;
    border-radius: 9px;
    background: #0f0f0f;
    display: flex;
    align-items: center;
    padding: 0 5px;
}
.left, .right {
    width: 0;
    height: 0;
    border-top: 5px solid transparent;
    border-bottom: 5px solid transparent;
}
.left {
    border-right: 6px solid #8a8a8a;
}
.right {
    border-left: 6px solid #8a8a8a;
    margin-left: auto;
}
.hthumb {
    width: 677px;
    height: 10px;
    margin-left: 6px;
    border-radius: 5px;
    background: #9a9a9a;
}

/* status bar */
.status {
    height: 22px;
    display: flex;
    align-items: center;
    background: #141414;
    border-bottom: 1px solid #d8d8d8;
    border-top: 1px solid #2a2a2a;
    padding-left: 11px;
    font-size: 10.500px;
    letter-spacing: 0;
}
.ready {
    width: 50px;
}
.acc {
    margin-right: 3px;
}
.acc-text {
    font-weight: 700;
    letter-spacing: -.15px;
    width: 126px;
    white-space: nowrap;
}
.views {
    margin-left: 1414px;
    display: flex;
    gap: 1px;
    height: 20px;
}
.view {
    width: 40px;
    display: flex;
    align-items: center;
    justify-content: center;
}
.view.on {
    background: #2c2c2c;
}
.zoom-btn {
    width: 16px;
    text-align: center;
    font-size: 14px;
}
.slider {
    width: 101px;
    height: 1px;
    margin-right: 1px;
    background: #9a9a9a;
    position: relative;
}
.slider i {
    position: absolute;
    left: 49px;
    top: -8px;
    width: 5px;
    height: 17px;
    background: #9a9a9a;
}
.pct-z {
    margin-left: 9px;
}
```
